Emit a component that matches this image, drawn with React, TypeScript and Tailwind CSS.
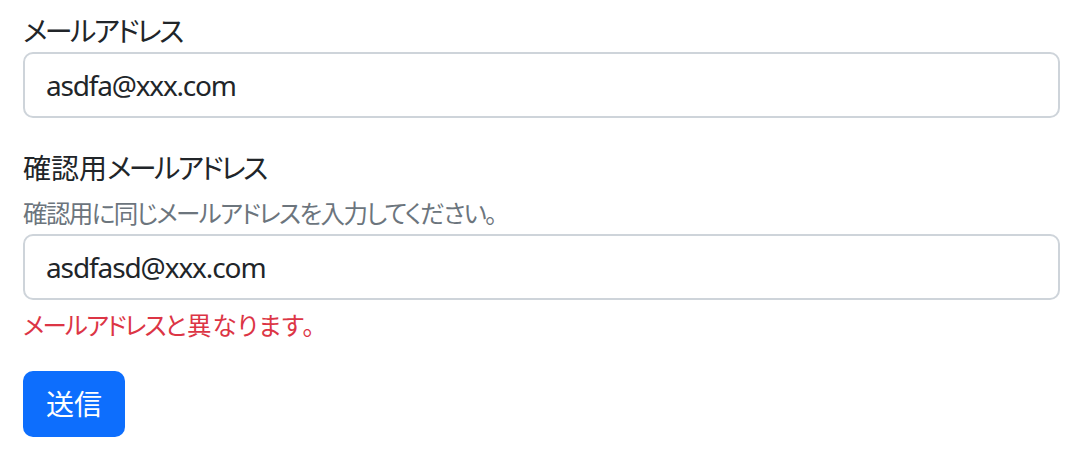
import React from "react";

const jp = "font-['Segoe_UI','Noto_Sans','Noto_Sans_CJK_JP',sans-serif] [font-feature-settings:'palt']";

export default function App() {
  return (
    <div className={`w-[1080px] h-[456px] bg-white pl-[23px] pr-[20px] pt-[10px] text-[#212529] ${jp}`}>
      <form onSubmit={(e) => e.preventDefault()} className="flex flex-col">
        <label className="text-[28px] leading-[42px]">
          <span className="tracking-[-2.5px]">メールアドレス</span>
        </label>
        <input
          readOnly
          value="asdfa@xxx.com"
          className={`h-[66px] w-full rounded-[10px] border-2 border-[#ced4da] bg-white px-[21px] text-[28px] tracking-[-1.2px] text-[#212529] outline-none ${jp}`}
        />
        <label className="mt-[29px] text-[28px] leading-[42px]">
          確認用<span className="tracking-[-2.5px]">メールアドレス</span>
        </label>
        <div className="mt-[7px] text-[24.5px] leading-[36px] tracking-[-1.6px] text-[#6c757d]">
          確認用に同じメールアドレスを入力してください。
        </div>
        <input
          readOnly
          value="asdfasd@xxx.com"
          className={`mt-[2px] h-[66px] w-full rounded-[10px] border-2 border-[#ced4da] bg-white px-[21px] text-[28px] tracking-[-1.1px] text-[#212529] outline-none ${jp}`}
        />
        <div className="mt-[8px] text-[24.5px] leading-[36px] text-[#dc3545]">
          <span className="tracking-[-1.8px]">メールアドレス</span>
          <span className="tracking-[0.8px]">と異なります。</span>
        </div>
        <div className="mt-[27px]">
          <button
            type="submit"
            className={`h-[66px] w-[102px] rounded-[10px] bg-[#0d6efd] text-[28px] text-white ${jp}`}
          >
            送信
          </button>
        </div>
      </form>
    </div>
  );
}
